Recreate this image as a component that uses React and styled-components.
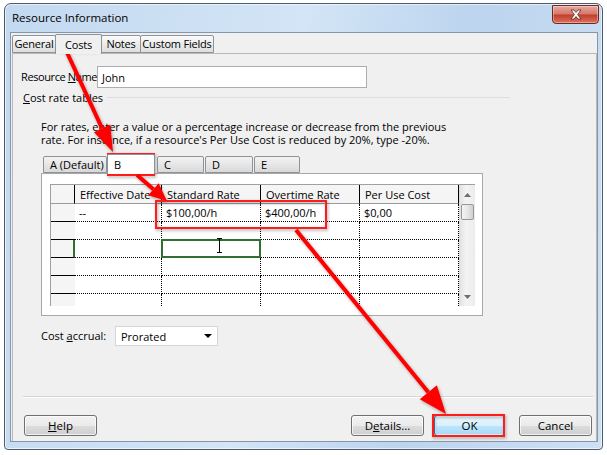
import React from 'react'
import styled, { createGlobalStyle } from 'styled-components'

const GlobalStyle = createGlobalStyle`
  html, body {
    margin: 0;
    padding: 0;
    background: #fff;
  }
  body {
    font-family: "Open Sans", "Noto Sans", sans-serif;
    font-size: 11px;
    color: #000;
    white-space: nowrap;
  }
`

const Screen = styled.div`
  position: relative;
  width: 607px;
  height: 455px;
  overflow: hidden;
  box-sizing: border-box;
  padding: 3px 4px 5px 4px;
  background: #fff;
`

const Window = styled.div`
  height: 100%;
  box-sizing: border-box;
  display: flex;
  flex-direction: column;
  border: 1px solid #4b5a6c;
  border-radius: 7px 7px 4px 4px;
  padding: 0 4px 7px 5px;
  background: linear-gradient(100deg, #c3d9f0 0%, #d3e5f6 45%, #bcd4ee 70%, #cde0f4 100%);
  box-shadow: inset 0 0 0 1px rgba(255, 255, 255, 0.6);
`

const TitleBar = styled.div`
  height: 28px;
  flex: none;
  display: flex;
  justify-content: space-between;
  align-items: flex-start;
  padding-left: 2px;
`

const Title = styled.span`
  margin-top: 6px;
  line-height: 16px;
  font-size: 11.5px;
`

const CloseButton = styled.div`
  width: 45px;
  height: 17px;
  margin-top: 1px;
  margin-right: -1px;
  display: flex;
  align-items: center;
  justify-content: center;
  border: 1px solid #6e2a22;
  border-radius: 0 0 4px 4px;
  background: linear-gradient(180deg, #e7a99f 0%, #d47a6b 45%, #c2402d 55%, #d9735f 100%);
  box-shadow: inset 0 0 0 1px rgba(255, 255, 255, 0.35);
`

const Client = styled.div`
  flex: 1;
  min-height: 0;
  display: flex;
  flex-direction: column;
  border: 1px solid #8396ab;
  background: #f0f0f0;
`

const TabStrip = styled.div`
  height: 20px;
  flex: none;
  display: flex;
  align-items: flex-end;
  padding-left: 1px;
`

const Tab = styled.div`
  box-sizing: border-box;
  width: ${p => p.$w}px;
  height: ${p => (p.$active ? 20 : 18)}px;
  margin-left: ${p => (p.$first ? 0 : -1)}px;
  margin-bottom: ${p => (p.$active ? -1 : 0)}px;
  display: flex;
  align-items: center;
  justify-content: center;
  border: 1px solid #8e9399;
  border-bottom: ${p => (p.$active ? 'none' : '1px solid #8e9399')};
  border-radius: 2px 2px 0 0;
  background: ${p => (p.$active ? '#f0f0f0' : 'linear-gradient(180deg, #fbfbfb 0%, #ececec 50%, #dedede 100%)')};
  position: relative;
  z-index: ${p => (p.$active ? 2 : 1)};
  line-height: 16px;
  letter-spacing: -0.2px;
`

const Panel = styled.div`
  flex: 1;
  min-height: 0;
  display: flex;
  flex-direction: column;
  margin: 0 0 0 1px;
  border: 1px solid #b9b9b9;
  border-bottom: none;
  padding-left: 8px;
`

const FieldRow = styled.div`
  display: flex;
  align-items: center;
  margin-top: ${p => p.$top}px;
  margin-left: ${p => p.$indent || 0}px;
`

const Label = styled.span`
  width: ${p => p.$w}px;
  flex: none;
  line-height: 16px;
  letter-spacing: ${p => p.$tight ? '-0.4px' : 'normal'};
`

const Acc = styled.span`
  text-decoration: underline;
`

const TextInput = styled.div`
  box-sizing: border-box;
  width: 270px;
  height: 22px;
  display: flex;
  align-items: center;
  padding-left: 4px;
  background: #fff;
  border: 1px solid #abadb3;
`

const GroupHeader = styled.div`
  display: flex;
  align-items: center;
  height: 14px;
  margin-top: 2px;
  margin-left: 2px;
  margin-right: 86px;

  &::after {
    content: '';
    flex: 1;
    margin-left: 4px;
    border-top: 1px solid #d5dfe5;
  }
`

const Paragraph = styled.p`
  margin: 16px 0 0 20px;
  line-height: 13px;
`

const InnerTabStrip = styled.div`
  display: flex;
  align-items: flex-end;
  height: 20px;
  margin: 7px 0 0 22px;
`

const InnerTab = styled.div`
  box-sizing: border-box;
  width: ${p => p.$w}px;
  height: ${p => (p.$active ? 20 : 17)}px;
  margin-left: ${p => p.$gap}px;
  margin-bottom: ${p => (p.$active ? -1 : 0)}px;
  padding-left: 6px;
  display: flex;
  align-items: center;
  border: 1px solid #8e9399;
  border-bottom: ${p => (p.$active ? 'none' : '1px solid #8e9399')};
  border-radius: 2px 2px 0 0;
  background: ${p => (p.$active ? '#fff' : 'linear-gradient(180deg, #f3f3f3 0%, #e6e6e6 50%, #d9d9d9 100%)')};
  position: relative;
  z-index: ${p => (p.$active ? 2 : 1)};
  line-height: 16px;
`

const InnerPanel = styled.div`
  box-sizing: border-box;
  flex: none;
  width: 442px;
  height: 143px;
  margin-left: 20px;
  padding: 10px 7px 0 8px;
  background: #fff;
  border: 1px solid #a7a7a7;
`

const Grid = styled.div`
  display: flex;
  height: 121px;
  overflow: hidden;
  border-top: 1px solid #a0a0a0;
  border-left: 1px solid #a0a0a0;
`

const GridBody = styled.div`
  display: flex;
  flex-direction: column;
`

const Row = styled.div`
  display: flex;
  flex: none;
  height: ${p => (p.$head ? 19 : 18)}px;
`

const HeadCell = styled.div`
  box-sizing: border-box;
  width: ${p => p.$w}px;
  display: flex;
  align-items: center;
  padding-left: 5px;
  background: #f5f5f5;
  border-right: 1px solid #000;
  border-bottom: 1px solid #9a9a9a;
`

const RowHead = styled.div`
  box-sizing: border-box;
  width: ${p => p.$w}px;
  background: #f5f5f5;
  border-bottom: 1px solid #000;
  border-right: ${p => (p.$active ? '2px solid #2f7031' : 'none')};
`

const Cell = styled.div`
  position: relative;
  box-sizing: border-box;
  width: ${p => p.$w}px;
  display: flex;
  align-items: center;
  padding-left: 4px;
  border-right: 1px dotted #000;
  border-bottom: 1px dotted #000;

  ${p =>
    p.$active &&
    `
    &::after {
      content: '';
      position: absolute;
      left: -1px;
      top: -1px;
      right: -1px;
      bottom: -1px;
      border: 2px solid #2f7031;
    }
  `}
`

const Scrollbar = styled.div`
  width: 16px;
  display: flex;
  flex-direction: column;
  background: linear-gradient(90deg, #e3e3e3 0%, #f3f3f3 40%, #ececec 100%);
  border-left: 1px solid #dcdcdc;
`

const ScrollArrow = styled.div`
  height: ${p => p.$h}px;
  flex: none;
  display: flex;
  align-items: center;
  justify-content: center;
`

const Thumb = styled.div`
  box-sizing: border-box;
  height: 16px;
  margin: 0 1px;
  flex: none;
  border: 1px solid #979797;
  border-radius: 2px;
  background: linear-gradient(90deg, #f4f4f4 0%, #e6e6e6 50%, #cfcfcf 100%);
`

const Track = styled.div`
  flex: 1;
`

const Select = styled.div`
  box-sizing: border-box;
  width: 103px;
  height: 20px;
  display: flex;
  align-items: center;
  justify-content: space-between;
  padding: 0 5px;
  background: #fff;
  border: 1px solid #d6d6d6;
`

const Separator = styled.div`
  margin: 50px 3px 0 2px;
  border-top: 1px solid #d5d5d5;
  border-bottom: 1px solid #fff;
`

const ButtonRow = styled.div`
  display: flex;
  align-items: center;
  margin-top: 17px;
  padding: 0 4px 0 3px;
`

const Spacer = styled.div`
  flex: 1;
`

const Button = styled.div`
  box-sizing: border-box;
  width: ${p => p.$w || 73}px;
  height: 21px;
  margin-left: ${p => p.$gap || 0}px;
  display: flex;
  align-items: center;
  justify-content: center;
  border: 1px solid ${p => (p.$default ? '#3c7fb1' : '#707070')};
  border-radius: 3px;
  background: ${p =>
    p.$default
      ? 'linear-gradient(180deg, #eaf6fd 0%, #d9f0fc 50%, #bee6fd 51%, #a7d9f5 100%)'
      : 'linear-gradient(180deg, #f2f2f2 0%, #ebebeb 50%, #dddddd 51%, #cfcfcf 100%)'};
  box-shadow: inset 0 0 0 1px rgba(255, 255, 255, 0.7);
  font-size: 11.5px;
`

const Overlay = styled.svg`
  position: absolute;
  left: 0;
  top: 0;
  width: 607px;
  height: 455px;
  pointer-events: none;
`

const columns = [
  { key: 'head', w: 24 },
  { key: 'date', w: 87, label: 'Effective Date' },
  { key: 'std', w: 99, label: 'Standard Rate' },
  { key: 'ovt', w: 99, label: 'Overtime Rate' },
  { key: 'use', w: 99, label: 'Per Use Cost' },
]

const rows = [
  { date: '--', std: '$100,00/h', ovt: '$400,00/h', use: '$0,00' },
  {},
  {},
  {},
  {},
  {},
]

const arrowHead = (x1, y1, x2, y2, len, half) => {
  const dx = x2 - x1
  const dy = y2 - y1
  const d = Math.hypot(dx, dy)
  const ux = dx / d
  const uy = dy / d
  const bx = x2 - ux * len
  const by = y2 - uy * len
  return {
    bx,
    by,
    points: `${x2},${y2} ${bx - uy * half},${by + ux * half} ${bx + uy * half},${by - ux * half}`,
  }
}

const Arrow = ({ from, to, len, half }) => {
  const h = arrowHead(from[0], from[1], to[0], to[1], len, half)
  return (
    <g>
      <line x1={from[0]} y1={from[1]} x2={h.bx} y2={h.by} stroke="#ff0000" strokeWidth="4" />
      <polygon points={h.points} fill="#ff0000" />
    </g>
  )
}

const Annotations = () => (
  <Overlay viewBox="0 0 607 455">
    <defs>
      <filter id="sh" x="-20%" y="-20%" width="140%" height="140%">
        <feDropShadow dx="1" dy="1.5" stdDeviation="1.5" floodColor="#000" floodOpacity="0.35" />
      </filter>
    </defs>
    <g filter="url(#sh)">
      <rect x="57" y="36" width="41" height="14" fill="none" stroke="#ff1a1a" strokeWidth="2" />
      <rect x="108" y="154" width="46" height="21" fill="none" stroke="#ff1a1a" strokeWidth="2" />
      <rect x="156" y="201" width="170" height="27" fill="none" stroke="#ff1a1a" strokeWidth="2" />
      <rect x="433" y="415" width="71" height="21" fill="none" stroke="#ff1a1a" strokeWidth="2" />
      <Arrow from={[64, 46]} to={[113, 152]} len={26} half={9} />
      <Arrow from={[137, 175]} to={[167, 201]} len={18} half={8} />
      <Arrow from={[296, 230]} to={[446, 414]} len={28} half={11} />
    </g>
    <g stroke="#000" strokeWidth="1">
      <line x1="219.5" y1="238" x2="219.5" y2="253" />
      <line x1="217" y1="238.5" x2="222" y2="238.5" />
      <line x1="217" y1="252.5" x2="222" y2="252.5" />
    </g>
  </Overlay>
)

const App = () => {
  return (
    <>
      <GlobalStyle />
      <Screen>
        <Window>
          <TitleBar>
            <Title>Resource Information</Title>
            <CloseButton>
              <svg width="14" height="11" viewBox="0 0 14 11">
                <path
                  d="M2 1 L5 1 L7 3.5 L9 1 L12 1 L8.6 5.5 L12 10 L9 10 L7 7.5 L5 10 L2 10 L5.4 5.5 Z"
                  fill="#fff"
                  stroke="#5a2520"
                  strokeWidth="0.8"
                />
              </svg>
            </CloseButton>
          </TitleBar>
          <Client>
            <TabStrip>
              <Tab $w={44} $first>General</Tab>
              <Tab $w={47} $active>Costs</Tab>
              <Tab $w={40}>Notes</Tab>
              <Tab $w={74}>Custom Fields</Tab>
            </TabStrip>
            <Panel>
              <FieldRow $top={12}>
                <Label $w={76} $tight>
                  Resource <Acc>N</Acc>ame:
                </Label>
                <TextInput>John</TextInput>
              </FieldRow>
              <GroupHeader>
                <span>
                  <Acc>C</Acc>ost rate tables
                </span>
              </GroupHeader>
              <Paragraph>
                For rates, enter a value or a percentage increase or decrease from the previous
                <br />
                rate. For instance, if a resource's Per Use Cost is reduced by 20%, type -20%.
              </Paragraph>
              <InnerTabStrip>
                <InnerTab $w={64} $gap={0}>A (Default)</InnerTab>
                <InnerTab $w={48} $gap={0} $active>B</InnerTab>
                <InnerTab $w={47} $gap={2}>C</InnerTab>
                <InnerTab $w={48} $gap={1}>D</InnerTab>
                <InnerTab $w={46} $gap={1}>E</InnerTab>
              </InnerTabStrip>
              <InnerPanel>
                <Grid>
                  <GridBody>
                    <Row $head>
                      {columns.map(c => (
                        <HeadCell key={c.key} $w={c.w}>
                          {c.label}
                        </HeadCell>
                      ))}
                    </Row>
                    {rows.map((r, i) => (
                      <Row key={i}>
                        <RowHead $w={columns[0].w} $active={i === 2} />
                        {columns.slice(1).map(c => (
                          <Cell key={c.key} $w={c.w} $active={i === 2 && c.key === 'std'}>
                            {r[c.key]}
                          </Cell>
                        ))}
                      </Row>
                    ))}
                  </GridBody>
                  <Scrollbar>
                    <ScrollArrow $h={19}>
                      <svg width="7" height="4" viewBox="0 0 7 4">
                        <path d="M0 4 L3.5 0 L7 4 Z" fill="#6d6d6d" />
                      </svg>
                    </ScrollArrow>
                    <Thumb />
                    <Track />
                    <ScrollArrow $h={19}>
                      <svg width="7" height="4" viewBox="0 0 7 4">
                        <path d="M0 0 L7 0 L3.5 4 Z" fill="#6d6d6d" />
                      </svg>
                    </ScrollArrow>
                  </Scrollbar>
                </Grid>
              </InnerPanel>
              <FieldRow $top={10} $indent={20}>
                <Label $w={74}>
                  Cost <Acc>a</Acc>ccrual:
                </Label>
                <Select>
                  <span>Prorated</span>
                  <svg width="8" height="4" viewBox="0 0 8 4">
                    <path d="M0 0 L8 0 L4 4 Z" fill="#000" />
                  </svg>
                </Select>
              </FieldRow>
              <Separator />
              <ButtonRow>
                <Button>
                  <span>
                    <Acc>H</Acc>elp
                  </span>
                </Button>
                <Spacer />
                <Button>
                  <span>
                    D<Acc>e</Acc>tails...
                  </span>
                </Button>
                <Button $w={71} $gap={10} $default>
                  OK
                </Button>
                <Button $gap={14}>Cancel</Button>
              </ButtonRow>
            </Panel>
          </Client>
        </Window>
        <Annotations />
      </Screen>
    </>
  )
}

export default App
